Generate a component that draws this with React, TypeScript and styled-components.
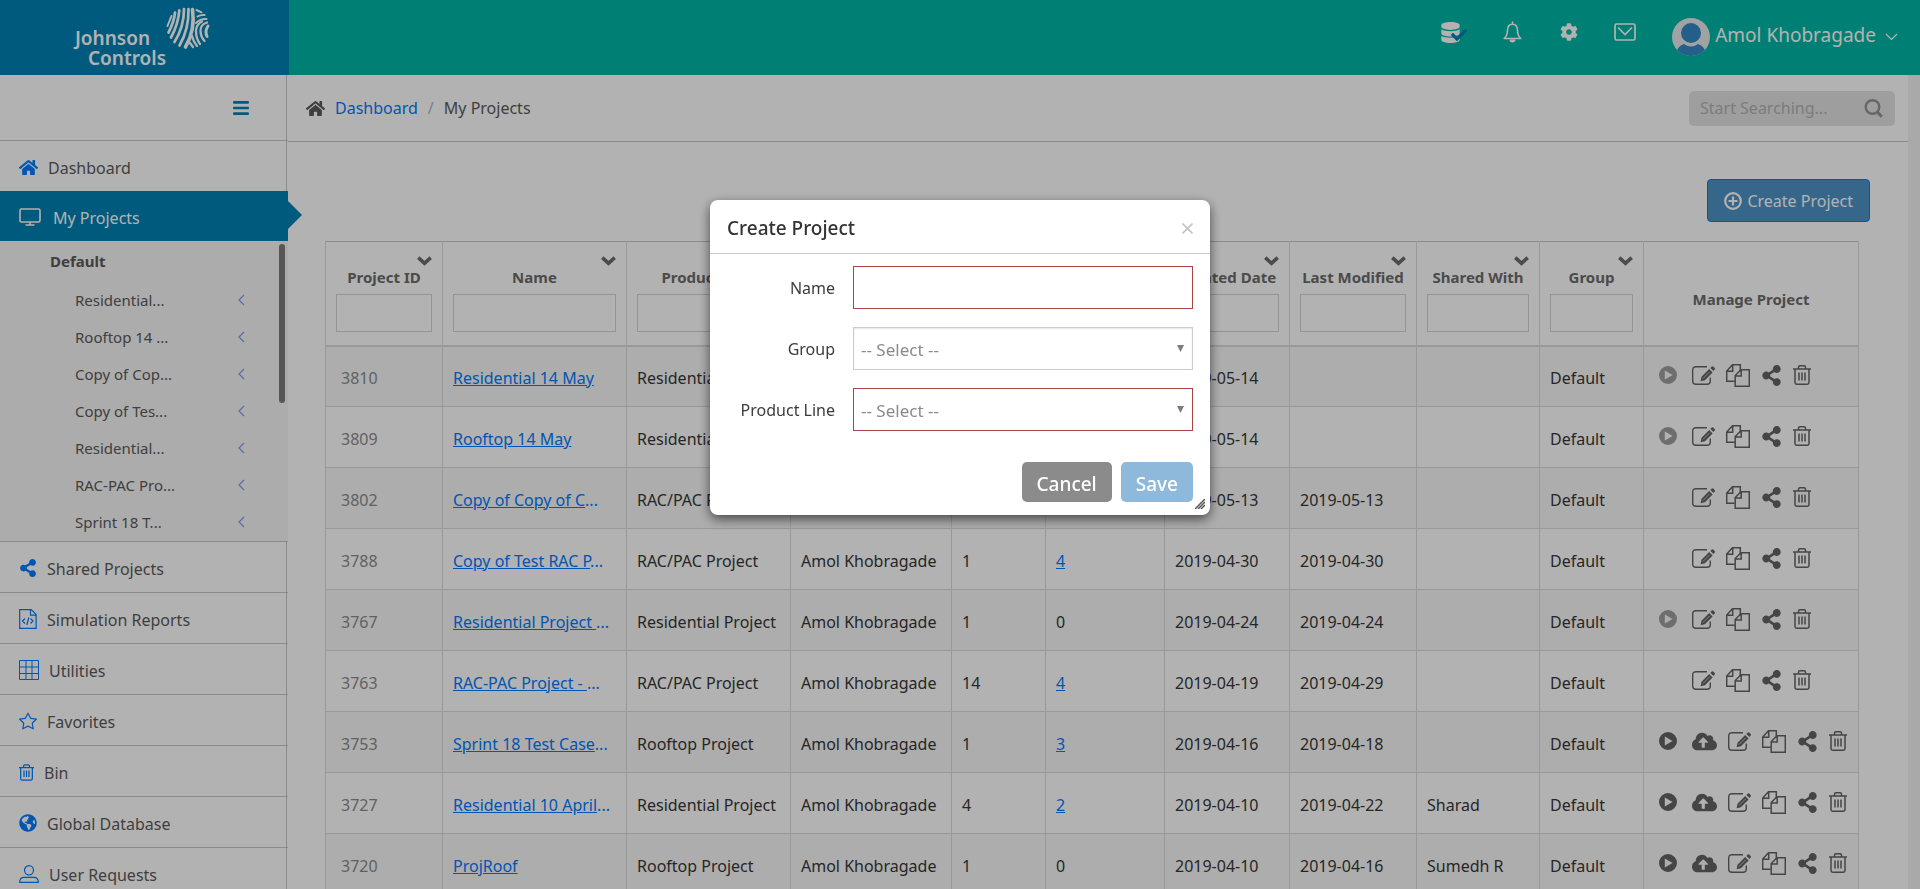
import React from 'react';
import styled, { createGlobalStyle, css } from 'styled-components';
import { FaBars, FaCheck, FaCloudUploadAlt, FaCog, FaDatabase, FaGlobeAmericas, FaHome, FaShareAlt } from 'react-icons/fa';
import { BsStar } from 'react-icons/bs';

const font = `"Noto Sans", "Open Sans", sans-serif`;
const color = {
  brand: '#0082b5',
  header: '#00b8a6',
  link: '#007bff',
  text: '#5b5b5b',
  heading: '#6c6c6c',
  line: '#c8c8c8',
  cell: '#dcdcdc',
  danger: '#a94442',
};

const GlobalStyle = createGlobalStyle`
  *, *::before, *::after { box-sizing: border-box; }
  body { margin: 0; background: #fff; font-family: ${font}; font-size: 16px; line-height: 24px; color: ${color.text}; }
  button, input, select { font-family: inherit; font-size: inherit; }
  a { color: ${color.link}; }
  svg { display: block; flex: none; }
`;

const Shell = styled.div`
  display: flex;
  flex-direction: column;
  height: 100vh;
  overflow: hidden;
`;

/* Header */

const TopBar = styled.header`
  display: flex;
  flex: none;
  height: 75px;
  background: ${color.header};
  color: #fff;
`;

const Brand = styled.a`
  display: flex;
  justify-content: center;
  width: 289px;
  background: ${color.brand};
  color: #fff;
`;

const HeaderTools = styled.nav`
  display: flex;
  flex: 1;
  justify-content: flex-end;
  padding: 0 22px 0 0;
`;

const ToolButton = styled.button<{ $width: number; $gap: number }>`
  position: relative;
  display: flex;
  align-items: center;
  justify-content: center;
  width: ${p => p.$width}px;
  height: 24px;
  margin: 20px ${p => p.$gap}px 0 0;
  padding: 0;
  border: 0;
  background: none;
  color: #fff;
`;

const SavedMark = styled.span`
  position: absolute;
  right: -7px;
  bottom: 1px;
  color: ${color.brand};
`;

const UserMenu = styled.button`
  display: flex;
  align-items: center;
  align-self: flex-start;
  gap: 5px;
  margin-top: 18px;
  padding: 0;
  border: 0;
  background: none;
  color: #fff;
  font-size: 19px;
`;

const UserName = styled.span`
  margin-right: 4px;
  padding-bottom: 4px;
  line-height: 34px;
`;

/* Sidebar */

const Body = styled.div`
  display: flex;
  flex: 1;
  min-height: 0;
  padding-right: 12px;
  background: #f3f3f3;
`;

const Sidebar = styled.aside`
  display: flex;
  flex-direction: column;
  flex: none;
  width: 288px;
  background: linear-gradient(to right, #fff 286px, ${color.line} 286px, ${color.line} 287px, #fff 287px);
`;

const SidebarToggle = styled.div`
  display: flex;
  align-items: center;
  justify-content: flex-end;
  flex: none;
  height: 66px;
  padding-right: 38px;
  border-bottom: 1px solid ${color.line};
`;

const IconButton = styled.button`
  padding: 0;
  border: 0;
  background: none;
  color: ${color.brand};
`;

const NavItem = styled.a<{ $active?: boolean; $ruled?: boolean }>`
  position: relative;
  display: flex;
  align-items: center;
  flex: none;
  gap: 10px;
  height: ${p => (p.$ruled ? 51 : 50)}px;
  padding: 2px 0 0 19px;
  color: ${color.link};
  text-decoration: none;
  ${p => p.$ruled && css`border-bottom: 1px solid ${color.line};`}
  ${p =>
    p.$active &&
    css`
      gap: 12px;
      background: ${color.brand};
      color: #fff;
      &::after {
        content: '';
        position: absolute;
        left: 100%;
        top: 10px;
        border: solid transparent;
        border-width: 14px 0 14px 14px;
        border-left-color: ${color.brand};
      }
    `}
`;

const NavLabel = styled.span<{ $active?: boolean }>`
  padding-top: 2px;
  color: ${p => (p.$active ? '#fff' : color.text)};
`;

const SubMenu = styled.div`
  position: relative;
  flex: none;
  height: 301px;
  padding-top: 8px;
  overflow: hidden;
  border-bottom: 1px solid ${color.line};
  background: #f6f6f6;
  font-size: 15px;
`;

const SubTitle = styled.div`
  height: 32px;
  padding-left: 50px;
  font-weight: 700;
`;

const SubItem = styled.a`
  display: flex;
  align-items: center;
  justify-content: space-between;
  height: 37px;
  padding: 0 43px 0 75px;
  color: ${color.text};
  text-decoration: none;
`;

const SubArrow = styled.span`
  color: #7f9cf0;
`;

const ScrollThumb = styled.div`
  position: absolute;
  top: 3px;
  right: 3px;
  width: 6px;
  height: 159px;
  border-radius: 3px;
  background: #7c7c7c;
`;

/* Content */

const Content = styled.main`
  flex: 1;
  min-width: 0;
  overflow: hidden;
  background: #fff;
`;

const CrumbBar = styled.div`
  display: flex;
  align-items: center;
  justify-content: space-between;
  height: 67px;
  padding: 0 13px 0 18px;
  border-bottom: 1px solid ${color.line};
`;

const Crumbs = styled.nav`
  display: flex;
  align-items: center;
  gap: 10px;
  a { text-decoration: none; }
`;

const Slash = styled.span`
  color: #b8b8b8;
`;

const SearchBox = styled.label`
  display: flex;
  align-items: center;
  width: 206px;
  height: 35px;
  padding: 0 12px 0 11px;
  border-radius: 5px;
  background: #e2e2e2;
  color: #949494;
`;

const SearchInput = styled.input`
  flex: 1;
  min-width: 0;
  padding: 0;
  border: 0;
  outline: 0;
  background: none;
  &::placeholder { color: #b2b2b2; opacity: 1; }
`;

const PageBody = styled.div`
  padding: 37px 50px 0 37px;
`;

const Actions = styled.div`
  display: flex;
  justify-content: flex-end;
  margin-bottom: 19px;
`;

const CreateButton = styled.button`
  display: flex;
  align-items: center;
  gap: 5px;
  height: 43px;
  margin-right: -12px;
  padding: 0 16px;
  border: 1px solid ${color.link};
  border-radius: 4px;
  background: #5093c8;
  color: #fff;
`;

const Table = styled.table`
  width: 100%;
  table-layout: fixed;
  border-collapse: collapse;
  border-top: 1px solid ${color.line};
`;

const Th = styled.th`
  height: 104px;
  padding: 13px 10px 11px;
  border: 1px solid ${color.cell};
  border-top-color: ${color.line};
  border-bottom: 2px solid ${color.cell};
  color: ${color.heading};
  font-size: 15px;
  font-weight: 700;
  line-height: 22px;
  white-space: nowrap;
`;

const PlainTh = styled(Th)`
  padding-top: 22px;
`;

const SortButton = styled.button`
  display: block;
  margin: 0 0 0 auto;
  padding: 0;
  border: 0;
  background: none;
  color: ${color.heading};
`;

const HeadLabel = styled.label`
  display: flex;
  flex-direction: column;
  align-items: center;
  gap: 6px;
`;

const Filter = styled.input`
  width: 100%;
  height: 38px;
  border: 1px solid #d4d4d4;
  background: none;
`;

const Row = styled.tr`
  &:nth-child(odd) { background: #f8f8f8; }
`;

const Td = styled.td<{ $id?: boolean }>`
  height: 61px;
  padding: 3px 0 0 ${p => (p.$id ? 15 : 10)}px;
  border: 1px solid ${color.cell};
  color: ${p => (p.$id ? '#8c8c8c' : '#373737')};
  white-space: nowrap;
`;

const Dots = styled.span`
  color: ${color.link};
`;

const Tools = styled.div`
  display: flex;
  align-items: center;
  gap: 11px;
  height: 24px;
  margin: -5px 0 0 5px;
`;

const ToolIcon = styled.button<{ $wide?: boolean; $muted?: boolean; $hidden?: boolean }>`
  margin: 0 ${p => (p.$wide ? 4 : 0)}px 0 0;
  padding: 0;
  border: 0;
  background: none;
  color: ${p => (p.$muted ? '#9e9e9e' : '#646464')};
  visibility: ${p => (p.$hidden ? 'hidden' : 'visible')};
`;

/* Dialog */

const Overlay = styled.div`
  position: fixed;
  inset: 0;
  display: flex;
  align-items: flex-start;
  justify-content: center;
  padding-top: 200px;
  background: rgba(0, 0, 0, 0.3);
`;

const Dialog = styled.form`
  position: relative;
  width: 500px;
  border-radius: 8px;
  background: #fff;
  box-shadow: 0 4px 12px rgba(0, 0, 0, 0.6);
`;

const DialogHeader = styled.div`
  display: flex;
  align-items: center;
  justify-content: space-between;
  height: 54px;
  padding: 3px 17px 0 17px;
  border-bottom: 1px solid #ccc;
`;

const DialogTitle = styled.h2`
  margin: 0;
  color: #333;
  font-size: 19px;
  font-weight: 500;
`;

const CloseButton = styled.button`
  padding: 0;
  border: 0;
  background: none;
  color: #c4c4c4;
`;

const Fields = styled.div`
  display: flex;
  flex-direction: column;
  gap: 18px;
  padding: 12px 17px 0;
`;

const Field = styled.div`
  position: relative;
  display: grid;
  grid-template-columns: 108px 1fr;
  align-items: center;
  gap: 18px;
`;

const FieldLabel = styled.label`
  color: #3c3c3c;
  text-align: right;
  white-space: nowrap;
`;

const control = css<{ $invalid?: boolean }>`
  width: 100%;
  height: 43px;
  padding: 2px 7px 0;
  border: 1px solid ${p => (p.$invalid ? color.danger : '#ccc')};
  border-radius: 0;
  outline: 0;
  background: #fff;
  color: #8a8a8a;
`;

const TextInput = styled.input<{ $invalid?: boolean }>`
  ${control}
`;

const Select = styled.select<{ $invalid?: boolean }>`
  ${control}
  appearance: none;
  font-size: 17px;
  box-shadow: ${p => (p.$invalid ? 'none' : 'inset 0 1px 2px rgba(0, 0, 0, 0.1)')};
`;

const SelectArrow = styled.span`
  position: absolute;
  top: 18px;
  right: 9px;
  color: #7c7c7c;
  pointer-events: none;
`;

const DialogFooter = styled.div`
  display: flex;
  justify-content: flex-end;
  gap: 9px;
  padding: 31px 17px 13px;
`;

const DialogButton = styled.button<{ $primary?: boolean }>`
  height: 40px;
  padding: 3px 15px 0;
  border: 0;
  border-radius: 5px;
  background: ${p => (p.$primary ? '#8fb9db' : '#8b8b8b')};
  color: #fff;
  font-size: 19px;
  font-weight: 500;
`;

const Grip = styled.span`
  position: absolute;
  right: 5px;
  bottom: 6px;
  color: #555;
`;

/* Drawings */

const Logo = () => (
  <svg width="160" height="75" viewBox="0 0 160 75" aria-label="Johnson Controls" fill="none" stroke="currentColor" strokeLinecap="round">
    <g fill="currentColor" stroke="none" fontFamily={font} fontSize="19" fontWeight="600">
      <text x="10" y="45">Johnson</text>
      <text x="23" y="65">Controls</text>
    </g>
    <path strokeWidth="3.600" d="M127.500 9.500Q130.500 30 120.500 47" />
    <path strokeWidth="2.700" d="M123.500 9Q124 29 114.500 45.500M119 9Q119 27 109.500 42M114.300 10.300Q113.300 24 106 37.500M110 12.500Q109 22 103.500 32.500" />
    <path strokeWidth="2" d="M106.500 16Q104.500 21 102.500 26M131.500 10l5 2.300M132.500 16.500q3.500-2 7-1.500M131 23Q135.500 18.500 141.500 19" />
    <path strokeWidth="2.300" d="M142 22.500Q135.500 24.500 135.500 30.500T139.500 41M137 21.500Q131 24.500 131 31.500T135 44M127 36Q128.500 42 132 46M125 43l3 4" />
    <path strokeWidth="3" d="M143 26Q139.500 31 142 36.500" />
  </svg>
);

const Avatar = () => (
  <svg width="38" height="38" viewBox="0 0 38 38">
    <defs>
      <clipPath id="avatar"><circle cx="19" cy="19" r="19" /></clipPath>
    </defs>
    <g clipPath="url(#avatar)">
      <rect width="38" height="38" fill="#e6e8ea" />
      <circle cx="19" cy="15" r="10" fill="#3488c6" />
      <path fill="#3488c6" d="M3 38q2-10 9-12 7 5 14 0 7 2 9 12z" />
    </g>
  </svg>
);

const Bell = () => (
  <svg width="19" height="22" viewBox="0 0 19 22" fill="none" stroke="currentColor" strokeWidth="1.600" strokeLinejoin="round">
    <path d="M1.200 17.500Q4.500 14.500 4.500 9.500 4.500 3.200 9.500 3.200T14.500 9.500Q14.500 14.500 17.800 17.500Z" />
    <path d="M9.500 3V1" strokeLinecap="round" />
    <path d="M6.500 18.500a3 3 0 0 0 6 0z" fill="currentColor" stroke="none" />
  </svg>
);

const Mail = () => (
  <svg width="22" height="18" viewBox="0 0 22 18" fill="none" stroke="currentColor" strokeWidth="1.700">
    <rect x="1" y="1" width="20" height="16" rx="1.500" />
    <path d="M4 4.500l7 7 7-7" />
  </svg>
);

const ThinChevron = ({ left }: { left?: boolean }) => (
  <svg width={left ? 7 : 13} height={left ? 12 : 8} viewBox={left ? '0 0 7 12' : '0 0 13 8'} fill="none" stroke="currentColor" strokeWidth="1.200">
    <path d={left ? 'M6 1L1 6l5 5' : 'M1 1l5.500 5.500L12 1'} />
  </svg>
);

const SortChevron = () => (
  <svg width="15" height="10" viewBox="0 0 15 10" fill="none" stroke="currentColor" strokeWidth="3.600">
    <path d="M1.300 1.600l6.200 5.800 6.200-5.800" />
  </svg>
);

const Monitor = () => (
  <svg width="22" height="18" viewBox="0 0 22 18" fill="none" stroke="currentColor" strokeWidth="1.600">
    <rect x="1" y="1" width="20" height="13" rx="1.500" />
    <path d="M11 14v3M6.500 17h9" />
  </svg>
);

const CodeFile = () => (
  <svg width="18" height="20" viewBox="0 0 18 20" fill="none" stroke="currentColor" strokeWidth="1.200">
    <path d="M.7.7h11.600l4.800 4.800v13.800H.7zM11.500.7v5.500h5.600M6 9.500L3.500 12 6 14.500M11.500 9.500L14 12l-2.500 2.500M9.800 8.500l-2 7.500" />
  </svg>
);

const Grid = () => (
  <svg width="20" height="20" viewBox="0 0 20 20" fill="none" stroke="currentColor">
    <path d="M.5.5h19v19H.5zM.5 7h19M.5 13.500h19M7 .5v19M13 .5v19" />
  </svg>
);

const Person = () => (
  <svg width="20" height="18" viewBox="0 0 20 18" fill="none" stroke="currentColor" strokeWidth="1.200">
    <ellipse cx="10" cy="5.300" rx="4.500" ry="4.700" />
    <path d="M.7 17.300q0-5 4.500-5h9.600q4.500 0 4.500 5z" />
  </svg>
);

const Trash = ({ width = 18, height = 20 }: { width?: number; height?: number }) => (
  <svg width={width} height={height} viewBox="0 0 18 20" fill="none" stroke="currentColor" strokeWidth="1.500">
    <path d="M0 4h18M5.500 4V2.200Q5.500.8 7 .8h4q1.500 0 1.500 1.400V4M2 4v13.500Q2 19.200 3.700 19.200h10.600q1.700 0 1.700-1.700V4M6 7.500v8M9 7.500v8M12 7.500v8" />
  </svg>
);

const Magnifier = () => (
  <svg width="19" height="19" viewBox="0 0 19 19" fill="none" stroke="currentColor" strokeWidth="2.400">
    <circle cx="8.500" cy="8" r="6.800" />
    <path d="M13.200 13l4.600 4.600" strokeWidth="3" />
  </svg>
);

const PlusCircle = () => (
  <svg width="18" height="18" viewBox="0 0 18 18" fill="none" stroke="currentColor" strokeWidth="2.200">
    <circle cx="9" cy="9" r="7.800" />
    <path d="M9 4.500v9M4.500 9h9" />
  </svg>
);

const Play = () => (
  <svg width="18" height="18" viewBox="0 0 18 18" fill="currentColor">
    <path fillRule="evenodd" d="M9 0a9 9 0 1 1 0 18A9 9 0 0 1 9 0zM5.800 4.600v8.800L13.600 9z" />
  </svg>
);

const Edit = () => (
  <svg width="23" height="19" viewBox="0 0 23 19">
    <path fill="none" stroke="currentColor" strokeWidth="1.400" d="M15 .8H4Q.7.8.7 4v11q0 3.200 3.300 3.200h11q3.300 0 3.300-3.200v-3.500" />
    <path fill="currentColor" d="M8.600 15.200l.9-4.400 7.700-7.700 3.400 3.400-7.700 7.800zM18.300 2l1.500-1.500q.7-.6 1.400 0l1.500 1.600q.6.700 0 1.400L21.500 5z" />
    <path stroke="#fff" strokeWidth=".6" d="M11 12.500l6.600-6.600" />
  </svg>
);

const Files = () => (
  <svg width="24" height="23" viewBox="0 0 24 23" fill="none" stroke="currentColor" strokeWidth="1.500">
    <path d="M14.300 7.500V.7H6.500L.7 7v10.300h8M6.700.7v6.500H.7" />
    <path d="M15 5.700h8.300v16.600H9.200V11.500zM15.200 5.700v6.200h-6" />
  </svg>
);

/* Page data */

type PlayState = 'ready' | 'muted' | 'none';
type Project = {
  id: string; name: string; cut?: boolean; line: string; models: string; runs: string;
  created: string; modified?: string; shared?: string; play: PlayState; upload?: boolean;
};

const projects: Project[] = [
  { id: '3810', name: 'Residential 14 May', line: 'Residential Project', models: '1', runs: '0', created: '2019-05-14', play: 'muted' },
  { id: '3809', name: 'Rooftop 14 May', line: 'Residential Project', models: '1', runs: '0', created: '2019-05-14', play: 'muted' },
  { id: '3802', name: 'Copy of Copy of C', cut: true, line: 'RAC/PAC Project', models: '1', runs: '0', created: '2019-05-13', modified: '2019-05-13', play: 'none' },
  { id: '3788', name: 'Copy of Test RAC P', cut: true, line: 'RAC/PAC Project', models: '1', runs: '4', created: '2019-04-30', modified: '2019-04-30', play: 'none' },
  { id: '3767', name: 'Residential Project ', cut: true, line: 'Residential Project', models: '1', runs: '0', created: '2019-04-24', modified: '2019-04-24', play: 'muted' },
  { id: '3763', name: 'RAC-PAC Project - ', cut: true, line: 'RAC/PAC Project', models: '14', runs: '4', created: '2019-04-19', modified: '2019-04-29', play: 'none' },
  { id: '3753', name: 'Sprint 18 Test Case', cut: true, line: 'Rooftop Project', models: '1', runs: '3', created: '2019-04-16', modified: '2019-04-18', play: 'ready', upload: true },
  { id: '3727', name: 'Residential 10 April', cut: true, line: 'Residential Project', models: '4', runs: '2', created: '2019-04-10', modified: '2019-04-22', shared: 'Sharad', play: 'ready', upload: true },
  { id: '3720', name: 'ProjRoof', line: 'Rooftop Project', models: '1', runs: '0', created: '2019-04-10', modified: '2019-04-16', shared: 'Sumedh R', play: 'ready', upload: true },
];

const columns: [string, number][] = [
  ['Project ID', 117], ['Name', 184], ['Product Line', 164], ['Owner', 161], ['Models', 94], ['Runs', 119],
  ['Created Date', 125], ['Last Modified', 127], ['Shared With', 123], ['Group', 104],
];

const recent = ['Residential...', 'Rooftop 14 ...', 'Copy of Cop...', 'Copy of Tes...', 'Residential...', 'RAC-PAC Pro...', 'Sprint 18 T...'];

const sections: [string, React.ReactNode][] = [
  ['Shared Projects', <FaShareAlt size={18} />],
  ['Simulation Reports', <CodeFile />],
  ['Utilities', <Grid />],
  ['Favorites', <BsStar size={18} />],
  ['Bin', <Trash width={15} height={17} />],
  ['Global Database', <FaGlobeAmericas size={18} />],
  ['User Requests', <Person />],
];

function ProjectTable() {
  return (
    <Table>
      <colgroup>
        {columns.map(([name, width]) => <col key={name} width={width} />)}
        <col width={215} />
      </colgroup>
      <thead>
        <tr>
          {columns.map(([name]) => (
            <Th key={name} scope="col">
              <SortButton type="button" aria-label={`Sort by ${name}`}><SortChevron /></SortButton>
              <HeadLabel>{name}<Filter type="text" /></HeadLabel>
            </Th>
          ))}
          <PlainTh scope="col">Manage Project</PlainTh>
        </tr>
      </thead>
      <tbody>
        {projects.map(p => (
          <Row key={p.id}>
            <Td $id>{p.id}</Td>
            <Td><a href="#project">{p.name}</a>{p.cut && <Dots>...</Dots>}</Td>
            <Td>{p.line}</Td>
            <Td>Amol Khobragade</Td>
            <Td>{p.models}</Td>
            <Td>{p.runs === '0' ? '0' : <a href="#runs">{p.runs}</a>}</Td>
            <Td>{p.created}</Td>
            <Td>{p.modified}</Td>
            <Td>{p.shared}</Td>
            <Td>Default</Td>
            <Td>
              <Tools>
                <ToolIcon type="button" aria-label="Run" $wide $muted={p.play === 'muted'} $hidden={p.play === 'none'}><Play /></ToolIcon>
                {p.upload && <ToolIcon type="button" aria-label="Upload"><FaCloudUploadAlt size={25} /></ToolIcon>}
                <ToolIcon type="button" aria-label="Edit"><Edit /></ToolIcon>
                <ToolIcon type="button" aria-label="Copy"><Files /></ToolIcon>
                <ToolIcon type="button" aria-label="Share"><FaShareAlt size={21} /></ToolIcon>
                <ToolIcon type="button" aria-label="Delete"><Trash /></ToolIcon>
              </Tools>
            </Td>
          </Row>
        ))}
      </tbody>
    </Table>
  );
}

function CreateProjectDialog() {
  return (
    <Overlay>
      <Dialog role="dialog" aria-labelledby="dialog-title">
        <DialogHeader>
          <DialogTitle id="dialog-title">Create Project</DialogTitle>
          <CloseButton type="button" aria-label="Close">
            <svg width="11" height="11" viewBox="0 0 11 11" fill="none" stroke="currentColor" strokeWidth="1.600"><path d="M.5.5l10 10M10.500.5l-10 10" /></svg>
          </CloseButton>
        </DialogHeader>
        <Fields>
          <Field>
            <FieldLabel htmlFor="name">Name</FieldLabel>
            <TextInput id="name" type="text" $invalid />
          </Field>
          <Field>
            <FieldLabel htmlFor="group">Group</FieldLabel>
            <Select id="group"><option>-- Select --</option></Select>
            <SelectArrow><DownTriangle /></SelectArrow>
          </Field>
          <Field>
            <FieldLabel htmlFor="product-line">Product Line</FieldLabel>
            <Select id="product-line" $invalid><option>-- Select --</option></Select>
            <SelectArrow><DownTriangle /></SelectArrow>
          </Field>
        </Fields>
        <DialogFooter>
          <DialogButton type="button">Cancel</DialogButton>
          <DialogButton type="submit" $primary>Save</DialogButton>
        </DialogFooter>
        <Grip>
          <svg width="10" height="10" viewBox="0 0 10 10" stroke="currentColor" strokeWidth="1.500"><path d="M0 10L10 0M3 10l7-7M6 10l4-4" /></svg>
        </Grip>
      </Dialog>
    </Overlay>
  );
}

function DownTriangle() {
  return (
    <svg width="7" height="7" viewBox="0 0 7 7" fill="currentColor"><path d="M0 0h7L3.500 7z" /></svg>
  );
}

export default function App() {
  return (
    <>
      <GlobalStyle />
      <Shell>
        <TopBar>
          <Brand href="#home"><Logo /></Brand>
          <HeaderTools aria-label="Account">
            <ToolButton type="button" aria-label="Saved data" $width={19} $gap={43}>
              <FaDatabase size={21} />
              <SavedMark><FaCheck size={16} /></SavedMark>
            </ToolButton>
            <ToolButton type="button" aria-label="Notifications" $width={19} $gap={38}><Bell /></ToolButton>
            <ToolButton type="button" aria-label="Settings" $width={18} $gap={36}><FaCog size={18} /></ToolButton>
            <ToolButton type="button" aria-label="Messages" $width={22} $gap={36}><Mail /></ToolButton>
            <UserMenu type="button">
              <Avatar />
              <UserName>Amol Khobragade</UserName>
              <ThinChevron />
            </UserMenu>
          </HeaderTools>
        </TopBar>
        <Body>
          <Sidebar>
            <SidebarToggle>
              <IconButton type="button" aria-label="Toggle menu"><FaBars size={18} /></IconButton>
            </SidebarToggle>
            <NavItem href="#dashboard"><FaHome size={19} /><NavLabel>Dashboard</NavLabel></NavItem>
            <NavItem href="#projects" $active><Monitor /><NavLabel $active>My Projects</NavLabel></NavItem>
            <SubMenu>
              <SubTitle>Default</SubTitle>
              {recent.map((name, i) => (
                <SubItem key={i} href="#project">{name}<SubArrow><ThinChevron left /></SubArrow></SubItem>
              ))}
              <ScrollThumb />
            </SubMenu>
            {sections.map(([name, icon]) => (
              <NavItem key={name} href="#section" $ruled>{icon}<NavLabel>{name}</NavLabel></NavItem>
            ))}
          </Sidebar>
          <Content>
            <CrumbBar>
              <Crumbs aria-label="Breadcrumb">
                <FaHome size={19} />
                <a href="#dashboard">Dashboard</a>
                <Slash>/</Slash>
                <span>My Projects</span>
              </Crumbs>
              <SearchBox>
                <SearchInput type="search" aria-label="Search" placeholder="Start Searching..." />
                <Magnifier />
              </SearchBox>
            </CrumbBar>
            <PageBody>
              <Actions>
                <CreateButton type="button"><PlusCircle />Create Project</CreateButton>
              </Actions>
              <ProjectTable />
            </PageBody>
          </Content>
        </Body>
      </Shell>
      <CreateProjectDialog />
    </>
  );
}
